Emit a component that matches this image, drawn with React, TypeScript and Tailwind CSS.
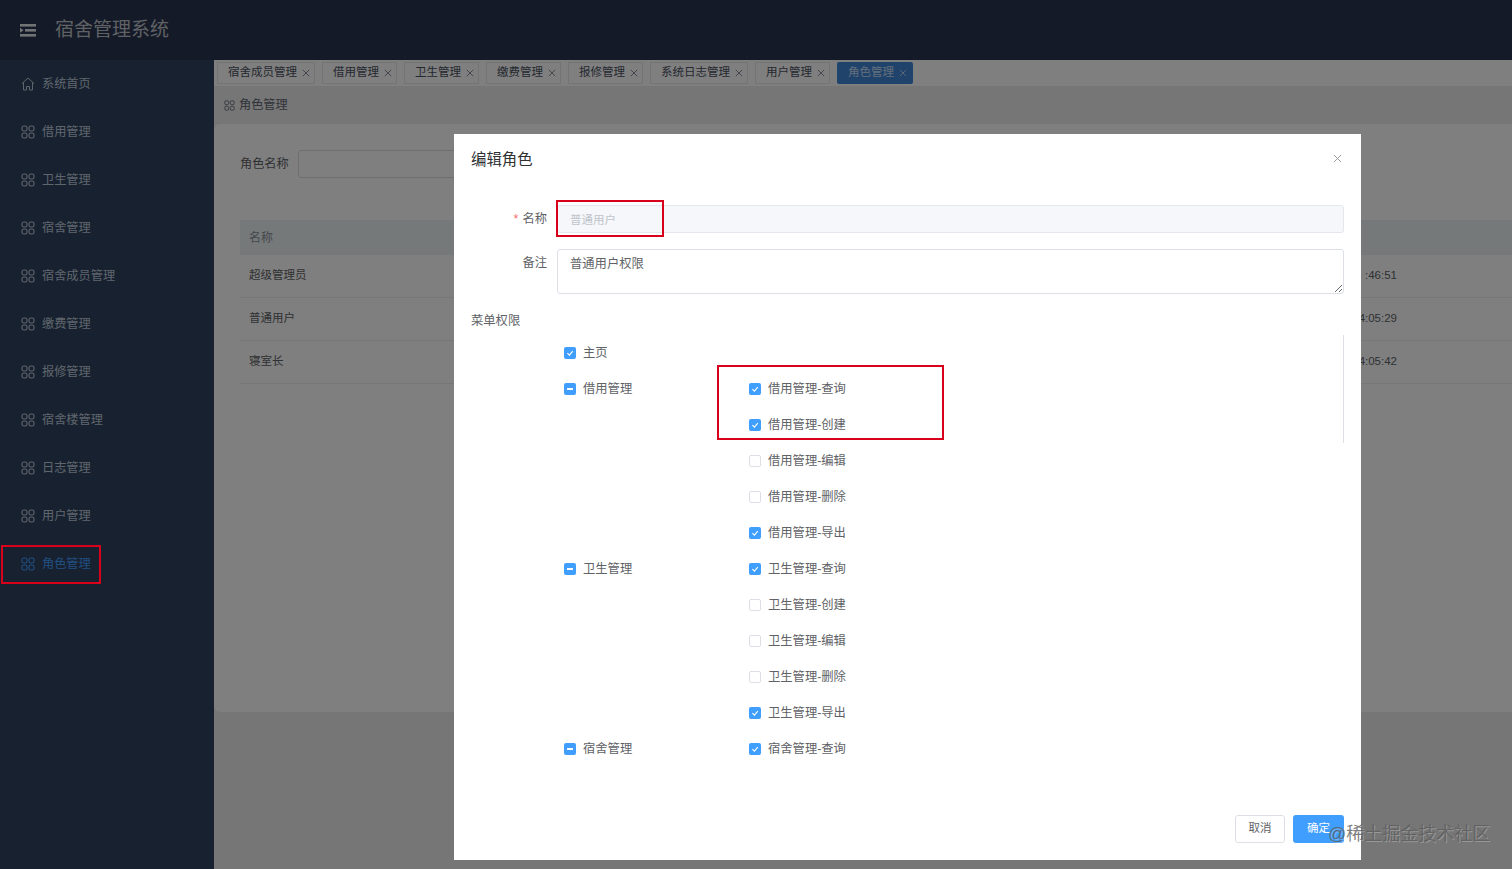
const menus = ["借用管理", "卫生管理", "宿舍管理", "宿舍成员管理", "缴费管理", "报修管理", "宿舍楼管理", "日志管理", "用户管理"];

const tabs = ["宿舍成员管理", "借用管理", "卫生管理", "缴费管理", "报修管理", "系统日志管理", "用户管理"];

const roles = [
  { name: "超级管理员", time: ":46:51" },
  { name: "普通用户", time: "4:05:29" },
  { name: "寝室长", time: "4:05:42" },
];

type CheckState = "on" | "off" | "half";

const tree: { name: string; state: CheckState; children: { name: string; state: CheckState }[] }[] = [
  { name: "主页", state: "on", children: [] },
  {
    name: "借用管理",
    state: "half",
    children: [
      { name: "借用管理-查询", state: "on" },
      { name: "借用管理-创建", state: "on" },
      { name: "借用管理-编辑", state: "off" },
      { name: "借用管理-删除", state: "off" },
      { name: "借用管理-导出", state: "on" },
    ],
  },
  {
    name: "卫生管理",
    state: "half",
    children: [
      { name: "卫生管理-查询", state: "on" },
      { name: "卫生管理-创建", state: "off" },
      { name: "卫生管理-编辑", state: "off" },
      { name: "卫生管理-删除", state: "off" },
      { name: "卫生管理-导出", state: "on" },
    ],
  },
  { name: "宿舍管理", state: "half", children: [{ name: "宿舍管理-查询", state: "on" }] },
];

function GridIcon({ className }: { className: string }) {
  return (
    <svg viewBox="0 0 14 14" fill="none" stroke="currentColor" strokeWidth="1.1" className={className}>
      <rect x="1" y="1" width="5" height="5" rx="1.8" />
      <rect x="8" y="1" width="5" height="5" rx="1.8" />
      <rect x="1" y="8" width="5" height="5" rx="1.8" />
      <rect x="8" y="8" width="5" height="5" rx="1.8" />
    </svg>
  );
}

function CloseIcon({ className }: { className: string }) {
  return (
    <svg viewBox="0 0 10 10" fill="none" stroke="currentColor" strokeWidth="1" className={className}>
      <path d="M1 1l8 8M9 1l-8 8" />
    </svg>
  );
}

function TreeCheck({ state, label }: { state: CheckState; label: string }) {
  return (
    <div className="flex h-[36px] items-center gap-[7px]">
      {state === "off" ? (
        <span className="h-[12px] w-[12px] rounded-[2px] border border-[#dcdfe6] bg-white" />
      ) : (
        <span className="flex h-[12px] w-[12px] items-center justify-center rounded-[2px] bg-[#409eff]">
          {state === "on" ? (
            <svg viewBox="0 0 12 12" fill="none" stroke="white" strokeWidth="1.1" className="h-[12px] w-[12px]">
              <path d="M3.4 6.2l2 2 3.4-4" />
            </svg>
          ) : (
            <span className="h-[1.5px] w-[6px] bg-white" />
          )}
        </span>
      )}
      <span className="text-[12.3px] text-[#606266]">{label}</span>
    </div>
  );
}

export default function App() {
  return (
    <div className="relative h-[869px] w-[1512px] overflow-hidden bg-[#ececec] font-['Liberation_Sans','Noto_Sans_CJK_SC',sans-serif]">
      <header className="flex h-[60px] items-center bg-[#283450]">
        <svg viewBox="0 0 16 13" className="ml-[20px] h-[13px] w-[16px] text-[#e4e6ea]" fill="currentColor">
          <rect x="0" y="0" width="16" height="2.6" />
          <rect x="5" y="5" width="11" height="2.6" />
          <rect x="0" y="10" width="16" height="2.6" />
          <path d="M0 3.8l3.6 2.5-3.6 2.5z" />
        </svg>
        <h1 className="ml-[19px] text-[19px] font-normal text-[#bfc3c9]">宿舍管理系统</h1>
      </header>

      <div className="flex h-[809px]">
        <aside className="w-[214px] shrink-0 bg-[#304360]">
          <div className="flex h-[48px] items-center gap-[7px] pl-[21px] text-[12.2px] text-[#bfcbd9]">
            <svg viewBox="0 0 14 14" fill="none" stroke="currentColor" strokeWidth="1" className="h-[14px] w-[14px]">
              <path d="M1 6.5L7 1l6 5.5M2.5 5.5V13h3V9.5h3V13h3V5.5" />
            </svg>
            系统首页
          </div>
          {menus.map((m) => (
            <div key={m} className="flex h-[48px] items-center gap-[7px] pl-[21px] text-[12.2px] text-[#bfcbd9]">
              <GridIcon className="h-[14px] w-[14px]" />
              {m}
            </div>
          ))}
          <div className="flex h-[48px] items-center gap-[7px] pl-[21px] text-[12.2px] text-[#409eff]">
            <GridIcon className="h-[14px] w-[14px]" />
            角色管理
          </div>
        </aside>

        <main className="flex min-w-0 flex-1 flex-col">
          <div className="flex h-[26px] shrink-0 items-center gap-[7px] bg-white pl-[3px]">
            {tabs.map((t) => (
              <div key={t} className="flex h-[22px] items-center gap-[5px] border border-[#e8e8e8] bg-white pl-[10px] pr-[4px] text-[11.5px] text-[#495060]">
                {t}
                <CloseIcon className="h-[8px] w-[8px] text-[#6a7080]" />
              </div>
            ))}
            <div className="ml-[0px] flex h-[22px] items-center gap-[5px] rounded-[2px] bg-[#4087d8] pl-[11px] pr-[6px] text-[11.5px] text-[#c9def5]">
              角色管理
              <CloseIcon className="h-[8px] w-[8px] text-[#c9def5]" />
            </div>
          </div>

          <div className="flex h-[38px] shrink-0 items-center gap-[4px] pl-[10px] text-[12.2px] text-[#5f6673]">
            <GridIcon className="h-[11px] w-[11px]" />
            角色管理
          </div>

          <section className="h-[588px] rounded-tl-[6px] rounded-bl-[6px] bg-white pl-[26px] pt-[26px]">
            <div className="flex items-center gap-[9px]">
              <span className="text-[12.2px] text-[#606266]">角色名称</span>
              <div className="h-[28px] w-[240px] rounded-[3px] border border-[#dcdfe6]" />
            </div>
            <div className="mt-[42px] flex h-[35px] items-center bg-[#ebf2f4] pl-[9px] text-[12px] text-[#8a9099]">名称</div>
            {roles.map((r) => (
              <div key={r.name} className="flex h-[43px] items-center justify-between border-b border-[#ebeef5] pl-[9px] text-[11.5px] text-[#606266]">
                <span>{r.name}</span>
                <span className="mr-[115px]">{r.time}</span>
              </div>
            ))}
          </section>
        </main>
      </div>

      {/* mask + dialog */}
      <div className="absolute inset-0 bg-black/50" />

      <div className="absolute left-[454px] top-[134px] flex h-[726px] w-[907px] flex-col bg-white px-[17px] pb-[17px]">
        <div className="flex h-[52px] shrink-0 items-center justify-between pr-[2px]">
          <h2 className="text-[15.4px] font-normal text-[#303133]">编辑角色</h2>
          <CloseIcon className="mb-[4px] h-[9px] w-[9px] text-[#909399]" />
        </div>

        <div className="mt-[19px] flex h-[28px] items-center">
          <label className="w-[86px] pr-[10px] text-right text-[12.3px] text-[#606266]">
            <span className="mr-[4px] text-[#f56c6c]">*</span>名称
          </label>
          <input
            disabled
            value="普通用户"
            className="h-[28px] flex-1 rounded-[3px] border border-[#e4e7ed] bg-[#f5f7fa] px-[12px] text-[11.5px] text-[#c0c4cc]"
          />
        </div>

        <div className="mt-[16px] flex">
          <label className="w-[86px] pr-[10px] pt-[5px] text-right text-[12.3px] text-[#606266]">备注</label>
          <textarea
            readOnly
            defaultValue="普通用户权限"
            className="h-[45px] flex-1 rounded-[3px] border border-[#dcdfe6] px-[12px] py-[5px] text-[12.3px] text-[#606266] outline-none"
          />
        </div>

        <div className="mt-[18px] text-[12.3px] leading-[18px] text-[#606266]">菜单权限</div>

        <div className="relative mt-[5px] h-[432px] pl-[93px]">
          <div className="absolute right-0 top-0 h-[108px] w-px bg-[#dcdfe6]" />
          {tree.map((g) => (
            <div key={g.name} className="flex">
              <div className="w-[185px]">
                <TreeCheck state={g.state} label={g.name} />
              </div>
              <div>
                {g.children.map((c) => (
                  <TreeCheck key={c.name} state={c.state} label={c.name} />
                ))}
              </div>
            </div>
          ))}
        </div>

        <div className="mt-auto flex justify-end gap-[8px]">
          <button className="h-[28px] w-[50px] rounded-[3px] border border-[#dcdfe6] bg-white text-[11.5px] text-[#606266]">取消</button>
          <button className="h-[28px] w-[51px] rounded-[3px] bg-[#409eff] text-[11.5px] text-white">确定</button>
        </div>
      </div>

      {/* annotations on the screenshot */}
      <div className="absolute left-[1px] top-[545px] h-[39px] w-[100px] border-2 border-[#d9001b]" />
      <div className="absolute left-[556px] top-[200px] h-[37px] w-[108px] border-2 border-[#d9001b]" />
      <div className="absolute left-[717px] top-[365px] h-[75px] w-[227px] border-2 border-[#d9001b]" />
      <div className="absolute left-[1328px] top-[822px] text-[18px] leading-[24px] text-[#5c5c5c]/80 [text-shadow:1px_1px_0_rgba(255,255,255,0.25)]">
        @稀土掘金技术社区
      </div>
    </div>
  );
}
